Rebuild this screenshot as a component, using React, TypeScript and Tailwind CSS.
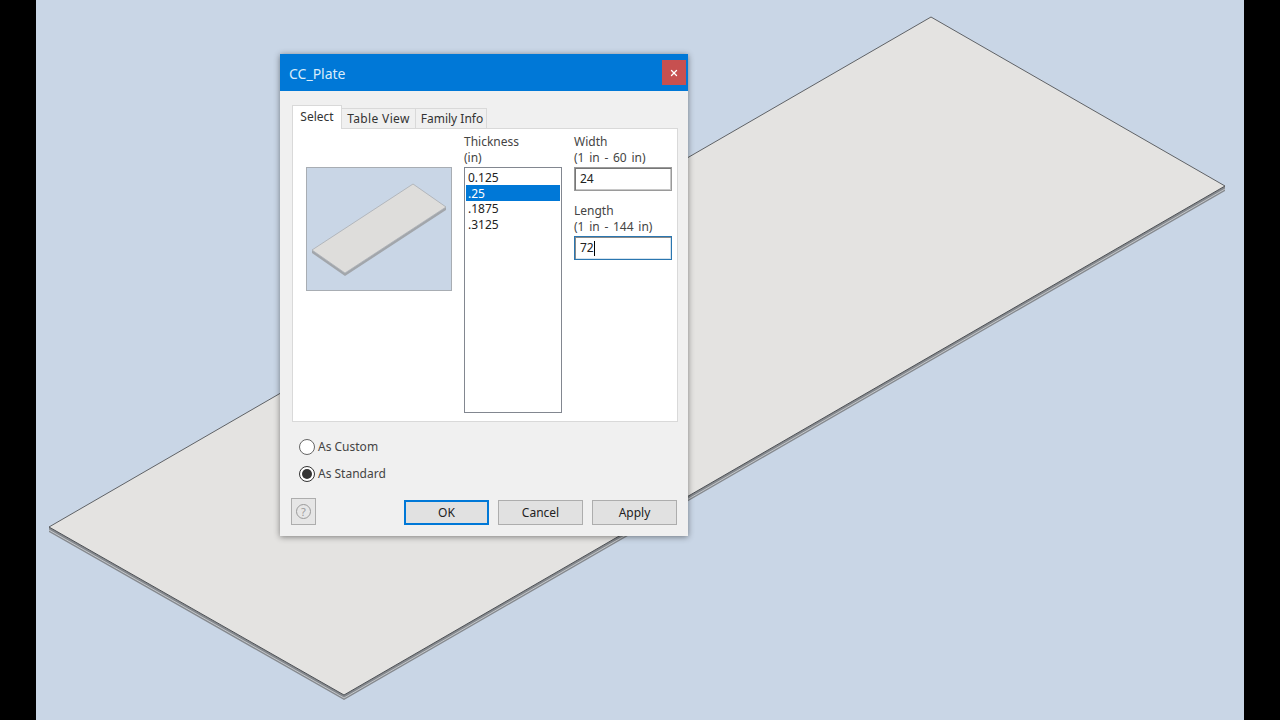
import { X } from "lucide-react";

const Plate = () => (
  <svg className="absolute inset-0" width="1208" height="720" viewBox="36 0 1208 720">
    <polygon points="49,527 344,695 1225,186 1225,191 344,700 49,532" fill="#85898e" />
    <polyline points="49,530 344,698 1225,189" fill="none" stroke="#c4c7ca" strokeWidth="1" />
    <polygon points="931,17 1225,186 344,695 49,527" fill="#e4e3e1" />
    <polyline points="49,527 931,17 1225,186" fill="none" stroke="#5f6266" strokeWidth="1" />
    <polyline points="49,527 344,695 1225,186" fill="none" stroke="#4d5054" strokeWidth="1" />
  </svg>
);

const Thumb = () => (
  <svg width="144" height="122" viewBox="0 0 144 122" className="block">
    <polygon points="5,82 38,105 139,39 139,42 38,108 5,85" fill="#a2a6ab" />
    <polygon points="106,16 139,39 38,105 5,82" fill="#dedddb" stroke="#a9adb2" strokeWidth="0.8" />
  </svg>
);

const Btn = ({ label, primary }: { label: string; primary?: boolean }) => (
  <button
    className={`w-[85px] h-[25px] shrink-0 bg-[#e1e1e1] text-[12px] text-[#222] border ${
      primary ? "border-2 border-[#0078d7]" : "border-[#adadad]"
    }`}
  >
    {label}
  </button>
);

const Radio = ({ label, checked }: { label: string; checked?: boolean }) => (
  <div className="flex items-center gap-[3px] h-[16px]">
    <div className={`w-[16px] h-[16px] rounded-full border bg-white flex items-center justify-center ${checked ? "border-[#333]" : "border-[#666]"}`}>
      {checked && <div className="w-[10px] h-[10px] rounded-full bg-[#333]" />}
    </div>
    <span className="text-[12px] text-[#444]">{label}</span>
  </div>
);

const Field = ({ title, range, value, focused }: { title: string; range: string; value: string; focused?: boolean }) => (
  <div>
    <div className="leading-[16px] text-[#444]">{title}</div>
    <div className="leading-[16px] text-[#444] mb-px whitespace-nowrap [word-spacing:1.6px]">{range}</div>
    <div
      className={`w-[98px] h-[24px] bg-white border flex items-center pl-[5px] ${
        focused
          ? "border-[#2a76b0] shadow-[inset_1px_1px_0_#8a8a8a,inset_-1px_-1px_0_#d5e3ee]"
          : "border-[#9a9a9a] shadow-[inset_1px_1px_0_#777,inset_-1px_-1px_0_#c8c8c8]"
      }`}
    >
      <span className="text-[#222]">{value}</span>
      {focused && <span className="w-px h-[15px] bg-black" />}
    </div>
  </div>
);

export default function App() {
  return (
    <div className="w-[1280px] h-[720px] bg-black flex justify-center overflow-hidden font-['Noto_Sans','Liberation_Sans',sans-serif]">
      <div className="relative w-[1208px] h-full bg-[#c9d6e6]">
        <Plate />

        {/* dialog window */}
        <div className="absolute left-[244px] top-[54px] w-[408px] h-[482px] bg-[#f0f0f0] shadow-[0_1px_6px_rgba(0,0,0,0.45)] flex flex-col">
          <div className="h-[37px] bg-[#0078d7] flex items-center justify-between pl-[9px] pr-[2px] shrink-0">
            <span className="text-[14px] text-[#d9ecfa] translate-y-px">CC_Plate</span>
            <div className="w-[24px] h-[25px] bg-[#c75050] flex items-center justify-center">
              <X size={10} strokeWidth={3} className="text-white" />
            </div>
          </div>

          <div className="flex-1 flex flex-col px-[12px] pt-[14px] text-[12px]">
            <div className="flex items-start h-[24px] relative z-10">
              <div className="h-[24px] w-[50px] bg-white border border-b-0 border-[#d9d9d9] flex items-start justify-center pt-[2px] text-[#333]">Select</div>
              <div className="h-[20px] mt-[3px] w-[74px] bg-[#f0f0f0] border-t border-r border-[#d9d9d9] flex items-center justify-center text-[#333] tracking-[0.35px]">Table View</div>
              <div className="h-[20px] mt-[3px] w-[71px] pl-[2px] bg-[#f0f0f0] border-t border-r border-[#d9d9d9] flex items-center justify-center text-[#333]">Family Info</div>
            </div>

            <div className="w-[386px] h-[294px] -mt-px bg-white border border-[#d9d9d9] flex pl-[13px] pt-[5px]">
              <div className="w-[146px] h-[124px] mt-[33px] border border-[#a8adb3] bg-[#c9d6e6] shrink-0">
                <Thumb />
              </div>
              <div className="ml-[12px] w-[98px] shrink-0">
                <div className="leading-[16px] text-[#444]">Thickness</div>
                <div className="leading-[16px] text-[#444] mb-px">(in)</div>
                <div className="h-[246px] border border-[#828790] p-px">
                  <div className="h-[16px] leading-[18px] pl-[2px] text-[#222]">0.125</div>
                  <div className="h-[16px] leading-[18px] pl-[2px] bg-[#0078d7] text-white">.25</div>
                  <div className="h-[16px] leading-[16px] pl-[2px] text-[#222]">.1875</div>
                  <div className="h-[16px] leading-[16px] pl-[2px] text-[#222]">.3125</div>
                </div>
              </div>
              <div className="ml-[12px] w-[98px] shrink-0 flex flex-col gap-[12px]">
                <Field title="Width" range="(1 in - 60 in)" value="24" />
                <Field title="Length" range="(1 in - 144 in)" value="72" focused />
              </div>
            </div>

            <div className="flex flex-col gap-[11px] pl-[7px] mt-[17px]">
              <Radio label="As Custom" />
              <Radio label="As Standard" checked />
            </div>

            <div className="flex items-start mt-[16px] -ml-px">
              <div className="w-[25px] h-[27px] shrink-0 border border-[#adadad] bg-[#e6e6e6] flex items-center justify-center">
                <div className="w-[15px] h-[15px] rounded-full border border-[#9a9a9a] text-[#9a9a9a] text-[11px] leading-[13px] text-center">?</div>
              </div>
              <div className="ml-[88px] mt-[2px] flex gap-[9px] shrink-0">
                <Btn label="OK" primary />
                <Btn label="Cancel" />
                <Btn label="Apply" />
              </div>
            </div>
          </div>
        </div>
      </div>
    </div>
  );
}
